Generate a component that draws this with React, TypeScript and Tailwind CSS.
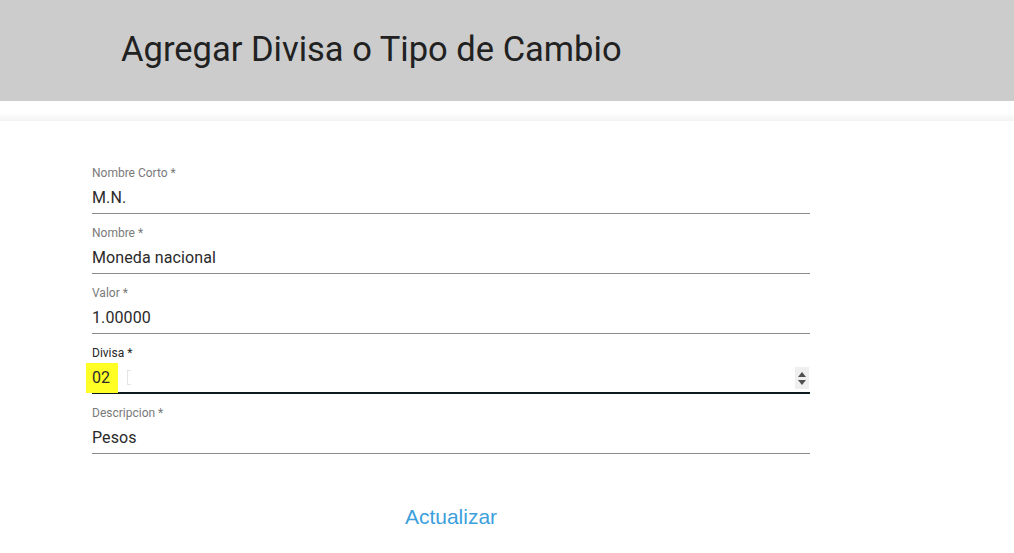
import React from "react";

function Field({ label, value, first }: { label: string; value: string; first?: boolean }) {
  return (
    <div className={first ? "" : "mt-[11px]"}>
      <div className="h-4 text-[12px] leading-4 text-[#7a7a7a]">{label}</div>
      <div className="mt-1 flex h-[29px] items-start border-b border-[#8c8c8c] pt-[1px]">
        <span className="text-[16px] leading-6 tracking-[0.1px] text-[#2a2a2a]">{value}</span>
      </div>
    </div>
  );
}

export default function App() {
  return (
    <div
      className="min-h-[553px] bg-white"
      style={{ fontFamily: "Roboto, 'Noto Sans', sans-serif" }}
    >
      <header className="flex h-[101px] items-center bg-[#cccccc] pl-[121px]">
        <h1 className="-mt-[3px] text-[34.5px] font-normal leading-none text-[#212121]">
          Agregar Divisa o Tipo de Cambio
        </h1>
      </header>
      <div className="mt-[12px] h-[8px] bg-gradient-to-b from-white to-[#f3f3f3]" />
      <main className="ml-[92px] w-[718px] pt-[44px]">
        <Field first label="Nombre Corto *" value="M.N." />
        <Field label="Nombre *" value="Moneda nacional" />
        <Field label="Valor *" value="1.00000" />
        <div className="mt-[11px]">
          <div className="h-4 text-[12px] leading-4 text-[#262626]">Divisa *</div>
          <div className="relative mt-1 flex h-[29px] items-start border-b-2 border-[#0d1a1f]">
            <span className="-ml-[6px] -mt-[2px] flex h-[30px] items-center bg-[#ffff26] pl-[6px] pr-[8px] text-[16px] leading-6 tracking-[0.1px] text-[#2a2a2a]">
              02
            </span>
            <span className="ml-[9px] mt-[5px] h-[15px] w-[4px] border border-r-0 border-[#e4e4e4]" />
            <div className="absolute right-[1px] top-[2px] flex h-[22px] w-[14px] flex-col items-center justify-center gap-[3px] bg-[#efefef]">
              <svg width="8" height="5" viewBox="0 0 8 5">
                <path d="M0 5 L4 0 L8 5 Z" fill="#505050" />
              </svg>
              <svg width="8" height="5" viewBox="0 0 8 5">
                <path d="M0 0 L8 0 L4 5 Z" fill="#505050" />
              </svg>
            </div>
          </div>
        </div>
        <div className="mt-[11px]">
          <div className="h-4 text-[12px] leading-4 text-[#7a7a7a]">Descripcion *</div>
          <div className="mt-1 flex h-[29px] items-start border-b border-[#8c8c8c] pt-[1px]">
            <span className="text-[16px] leading-6 tracking-[0.1px] text-[#2a2a2a]">Pesos</span>
          </div>
        </div>
        <div className="mt-[51px] flex justify-center">
          <button
            className="text-[21px] leading-6 text-[#3d9fdc]"
            style={{ fontFamily: "'Liberation Sans', Arial, sans-serif" }}
          >
            Actualizar
          </button>
        </div>
      </main>
    </div>
  );
}
